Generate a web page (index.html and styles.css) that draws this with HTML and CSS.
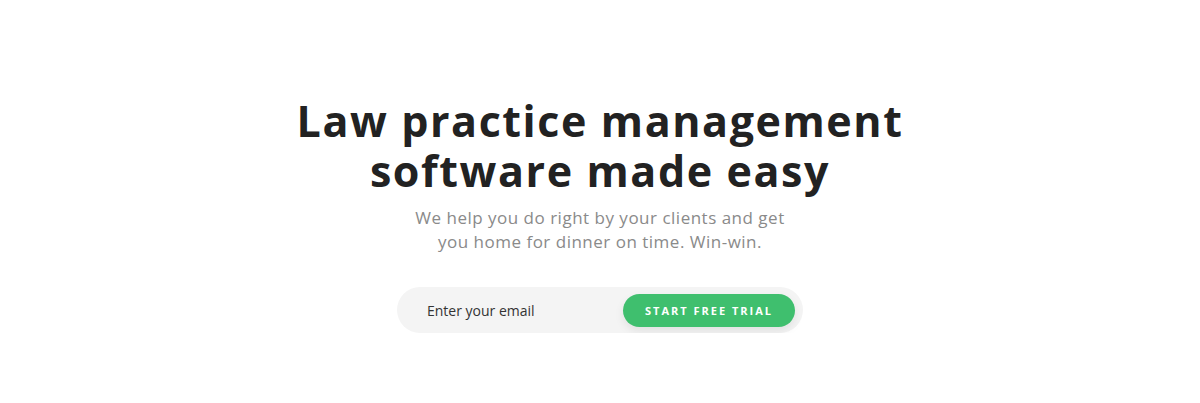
FILE: index.html
```html
<!DOCTYPE html>
<html lang="en">
<head>
<meta charset="utf-8">
<title>Law practice management software</title>
<link rel="stylesheet" href="styles.css">
</head>
<body>
<main class="hero">
  <h1 class="hero-title">Law practice management<br>software made easy</h1>
  <p class="hero-sub">We help you do right by your clients and get<br>you home for dinner on time. Win-win.</p>
  <form class="signup">
    <input class="signup-input" type="email" placeholder="Enter your email">
    <button class="signup-btn" type="button">START FREE TRIAL</button>
  </form>
</main>
</body>
</html>
```

FILE: styles.css
```css
* { box-sizing: border-box; }
html, body { margin: 0; background: #fff; }
body { font-family: "Open Sans", "Noto Sans", sans-serif; }
.hero {
  display: flex;
  flex-direction: column;
  align-items: center;
  padding-top: 96px;
}
.hero-title {
  margin: 0;
  font-size: 43px;
  line-height: 50px;
  font-weight: 700;
  color: #222;
  text-align: center;
  letter-spacing: 1.6px;
}
.hero-sub {
  margin: 10px 0 0;
  font-size: 17px;
  line-height: 24px;
  color: #8a8a8a;
  text-align: center;
  letter-spacing: 0.5px;
}
.signup {
  margin-top: 33px;
  width: 406px;
  height: 46px;
  border-radius: 23px;
  background: #f4f4f4;
  display: flex;
  align-items: center;
  justify-content: space-between;
  padding: 0 8px 0 30px;
}
.signup-input {
  flex: 1;
  border: 0;
  background: transparent;
  font-family: inherit;
  font-size: 14px;
  color: #333;
  outline: none;
  padding: 0;
}
.signup-input::placeholder { color: #333; }
.signup-btn {
  width: 172px;
  height: 33px;
  border: 0;
  border-radius: 17px;
  background: #3fbf6e;
  color: #fff;
  font-family: inherit;
  font-weight: 700;
  font-size: 11px;
  letter-spacing: 2px;
  box-shadow: 0 4px 10px rgba(0,0,0,0.08);
}
```
